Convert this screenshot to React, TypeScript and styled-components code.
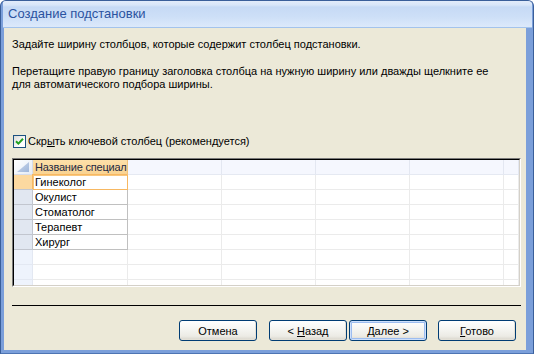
import React from 'react';
import styled, { createGlobalStyle } from 'styled-components';

const GlobalStyle = createGlobalStyle`
  html, body {
    margin: 0;
    padding: 0;
    background: #ffffff;
  }
  body {
    font-family: 'Liberation Sans', Arial, sans-serif;
    font-size: 11px;
    color: #000;
  }
`;

const Window = styled.div`
  width: 534px;
  height: 354px;
  box-sizing: border-box;
  display: flex;
  flex-direction: column;
  background: #7b9fda;
  border: 1px solid #3a5f9a;
  border-bottom-color: #4d74b3;
  border-radius: 6px 6px 0 0;
  overflow: hidden;
`;

const TitleBar = styled.div`
  height: 23px;
  padding: 3px 0 0 5px;
  margin: 0 1px 0 2px;
  border-bottom: 1px solid #a3c3ec;
  background: linear-gradient(
    to bottom,
    #e2ecfa 0px,
    #d8e6f9 4px,
    #c6daf5 6px,
    #cddff7 60%,
    #dce9fb 100%
  );
  font-size: 13px;
  line-height: 20px;
  color: #2b53a0;
`;

const Client = styled.div`
  flex: 1;
  margin: 0 7px 3px 3px;
  padding: 0 5px 0 8px;
  background: #ece9d8;
  display: flex;
  flex-direction: column;
`;

const Para = styled.p<{ $top: number }>`
  margin: ${(p) => p.$top}px 0 0;
  line-height: 13px;
`;

const CheckRow = styled.label`
  margin-top: 44px;
  height: 13px;
  display: flex;
  align-items: center;
  gap: 2px;
  line-height: 13px;
`;

const CheckBox = styled.span`
  width: 13px;
  height: 13px;
  box-sizing: border-box;
  border: 1px solid #1c5180;
  background: linear-gradient(135deg, #dcdcd7, #ffffff 70%);
  display: flex;
  align-items: center;
  justify-content: center;
  margin-left: 1px;
`;

const Hot = styled.span`
  text-decoration: underline;
  text-underline-offset: 1px;
`;

const GridFrame = styled.div`
  margin-top: 10px;
  height: 129px;
  box-sizing: border-box;
  border: 1px solid;
  border-color: #7a7a7a #ffffff #ffffff #7a7a7a;
`;

const Grid = styled.div`
  height: 100%;
  box-sizing: border-box;
  border: 1px solid;
  border-color: #000000 #d4d0c8 #d4d0c8 #000000;
  background: #ffffff;
  display: grid;
  grid-template-columns: 19px 95px repeat(4, 94px) 1fr;
  grid-auto-rows: 15px;
  overflow: hidden;
`;

const CornerCell = styled.div`
  box-sizing: border-box;
  border-right: 1px solid #d5dceb;
  border-bottom: 1px solid #d5dceb;
  background: linear-gradient(135deg, #ffffff, #e4ebf6);
  display: flex;
`;

const HeadCell = styled.div<{ $active?: boolean }>`
  box-sizing: border-box;
  border-right: 1px solid ${(p) => (p.$active ? '#f2c27a' : '#e3e7f1')};
  border-bottom: 1px solid ${(p) => (p.$active ? '#f2c27a' : '#e5e9f2')};
  background: ${(p) =>
    p.$active ? 'linear-gradient(to bottom, #fde0a9, #f9d392)' : '#f5f7fe'};
  padding-left: 2px;
  line-height: 14px;
  letter-spacing: -0.2px;
  white-space: nowrap;
  overflow: hidden;
  color: #1e2a44;
`;

const RowHandle = styled.div<{ $state: 'current' | 'filled' | 'empty' }>`
  box-sizing: border-box;
  border-right: 1px solid
    ${(p) => (p.$state === 'empty' ? '#e3e8f2' : '#c2c6cf')};
  border-bottom: 1px solid
    ${(p) => (p.$state === 'empty' ? '#e3e8f2' : '#c2c6cf')};
  background: ${(p) =>
    p.$state === 'current'
      ? '#fcd9a0'
      : p.$state === 'filled'
      ? '#e1e7f1'
      : '#eef3fc'};
`;

const DataCell = styled.div<{ $filled?: boolean; $current?: boolean }>`
  box-sizing: border-box;
  position: relative;
  border-right: 1px solid ${(p) => (p.$filled ? '#c0c0c0' : '#ebebeb')};
  border-bottom: 1px solid ${(p) => (p.$filled ? '#c0c0c0' : '#ebebeb')};
  background: #ffffff;
  padding-left: 2px;
  line-height: 14px;
  white-space: nowrap;
  overflow: hidden;
  ${(p) =>
    p.$current &&
    `
    overflow: visible;
    z-index: 1;
    border-color: #f7b862;
    box-shadow: -1px -1px 0 0 #f7b862, inset 1px 1px 0 0 #f9c77e;
  `}
`;

const Separator = styled.div`
  margin-top: 18px;
  height: 1px;
  background: #000000;
`;

const ButtonRow = styled.div`
  margin-top: 14px;
  padding-right: 5px;
  display: flex;
  justify-content: flex-end;
`;

const Button = styled.button<{ $after?: number; $default?: boolean }>`
  width: 78px;
  height: 21px;
  margin: 0 ${(p) => p.$after ?? 0}px 0 0;
  padding: 0;
  box-sizing: border-box;
  border: 1px solid #003c74;
  border-radius: 3px;
  background: linear-gradient(
    to bottom,
    #ffffff 0%,
    #f6f6f3 40%,
    #ecebe5 80%,
    #d8d4ca 100%
  );
  box-shadow: ${(p) =>
    p.$default
      ? 'inset 0 0 0 1px #cee0fb, inset 0 0 0 2px #9dbdf0'
      : 'inset -1px -1px 0 #e3e0d6'};
  font-family: 'Liberation Sans', Arial, sans-serif;
  font-size: 11px;
  color: #000;
  line-height: 18px;
  text-align: center;
`;

function CheckMark() {
  return (
    <svg width="9" height="9" viewBox="0 0 9 9">
      <path
        d="M1 4.2 L3.4 6.6 L8 1.8"
        fill="none"
        stroke="#21a121"
        strokeWidth="2"
      />
    </svg>
  );
}

function CornerMark() {
  return (
    <svg width="18" height="14" viewBox="0 0 18 14">
      <defs>
        <linearGradient id="tri" x1="0" y1="0" x2="1" y2="1">
          <stop offset="0" stopColor="#cdd9ec" />
          <stop offset="1" stopColor="#9fb6da" />
        </linearGradient>
      </defs>
      <polygon points="15,2 15,12 3,12" fill="url(#tri)" />
    </svg>
  );
}

const specialties = ['Гинеколог', 'Окулист', 'Стоматолог', 'Терапевт', 'Хирург'];
const extraCols = 5;
const emptyRows = 3;

export default function App() {
  return (
    <>
      <GlobalStyle />
      <Window>
        <TitleBar>Создание подстановки</TitleBar>
        <Client>
          <Para $top={10}>
            Задайте ширину столбцов, которые содержит столбец подстановки.
          </Para>
          <Para $top={14}>
            Перетащите правую границу заголовка столбца на нужную ширину или
            дважды щелкните ее
            <br />
            для автоматического подбора ширины.
          </Para>
          <CheckRow>
            <CheckBox>
              <CheckMark />
            </CheckBox>
            <span>
              Скр<Hot>ы</Hot>ть ключевой столбец (рекомендуется)
            </span>
          </CheckRow>
          <GridFrame>
            <Grid>
              <CornerCell>
                <CornerMark />
              </CornerCell>
              <HeadCell $active>Название специал</HeadCell>
              {Array.from({ length: extraCols }).map((_, i) => (
                <HeadCell key={`h${i}`} />
              ))}
              {specialties.map((name, r) => (
                <React.Fragment key={name}>
                  <RowHandle $state={r === 0 ? 'current' : 'filled'} />
                  <DataCell $filled $current={r === 0}>
                    {name}
                  </DataCell>
                  {Array.from({ length: extraCols }).map((_, i) => (
                    <DataCell key={`c${r}-${i}`} />
                  ))}
                </React.Fragment>
              ))}
              {Array.from({ length: emptyRows }).map((_, r) => (
                <React.Fragment key={`e${r}`}>
                  <RowHandle $state="empty" />
                  {Array.from({ length: extraCols + 1 }).map((_, i) => (
                    <DataCell key={`e${r}-${i}`} />
                  ))}
                </React.Fragment>
              ))}
            </Grid>
          </GridFrame>
          <Separator />
          <ButtonRow>
            <Button $after={12}>Отмена</Button>
            <Button $after={2}>
              &lt; <Hot>Н</Hot>азад
            </Button>
            <Button $after={11} $default>
              <Hot>Д</Hot>алее &gt;
            </Button>
            <Button>
              <Hot>Г</Hot>отово
            </Button>
          </ButtonRow>
        </Client>
      </Window>
    </>
  );
}
